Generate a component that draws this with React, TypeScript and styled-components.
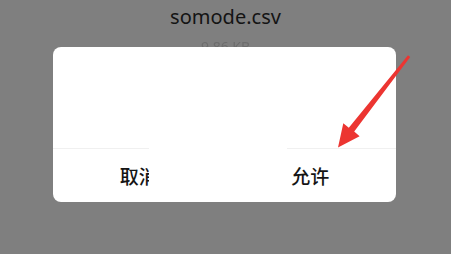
import React from "react";
import styled, { createGlobalStyle } from "styled-components";

const GlobalStyle = createGlobalStyle`
  html, body {
    margin: 0;
    padding: 0;
    background: #7f7f7f;
  }
  body {
    font-family: "Noto Sans", "Noto Sans CJK SC", sans-serif;
  }
`;

const Screen = styled.div`
  position: relative;
  width: 451px;
  height: 254px;
  overflow: hidden;
  background: #7f7f7f;
`;

const FileName = styled.div`
  padding-top: 5px;
  text-align: center;
  font-size: 20px;
  line-height: 24px;
  color: #141414;
`;

// file size line, its lower part hidden behind the dialog
const SizeClip = styled.div`
  margin-top: 13px;
  height: 5px;
  overflow: hidden;
  text-align: center;
  font-size: 14px;
  line-height: 10px;
  color: #6d6d6d;
  filter: blur(0.5px);
`;

const Dialog = styled.div`
  position: relative;
  margin-left: 53px;
  width: 343px;
  height: 155px;
  background: #ffffff;
  border-radius: 8px;
  display: flex;
  flex-direction: column;
`;

const Body = styled.div`
  height: 101px;
`;

const Divider = styled.div`
  height: 1px;
  background: #f0f0f0;
`;

const Actions = styled.div`
  flex: 1;
  display: flex;
`;

const Action = styled.div`
  flex: 1;
  display: flex;
  align-items: center;
  justify-content: center;
  font-family: "Noto Sans CJK SC", sans-serif;
  font-size: 19px;
  font-weight: 500;
  color: #151515;
`;

const Patch = styled.div`
  position: absolute;
  left: 96px;
  top: 92px;
  width: 138px;
  height: 52px;
  background: #ffffff;
`;

const ArrowLayer = styled.svg`
  position: absolute;
  left: 0;
  top: 0;
  pointer-events: none;
`;

export default function App() {
  return (
    <>
      <GlobalStyle />
      <Screen>
        <FileName>somode.csv</FileName>
        <SizeClip>9.86 KB</SizeClip>
        <Dialog>
          <Body />
          <Divider />
          <Actions>
            <Action>取消</Action>
            <Action>允许</Action>
          </Actions>
          <Patch />
        </Dialog>
        <ArrowLayer width="451" height="254" viewBox="0 0 451 254">
          <polygon
            points="410.2,56.9 354.2,131.6 359.6,136.2 338,147.5 343.3,123.3 348.8,127.7 408.0,55.2"
            fill="#ec3531"
          />
        </ArrowLayer>
      </Screen>
    </>
  );
}
